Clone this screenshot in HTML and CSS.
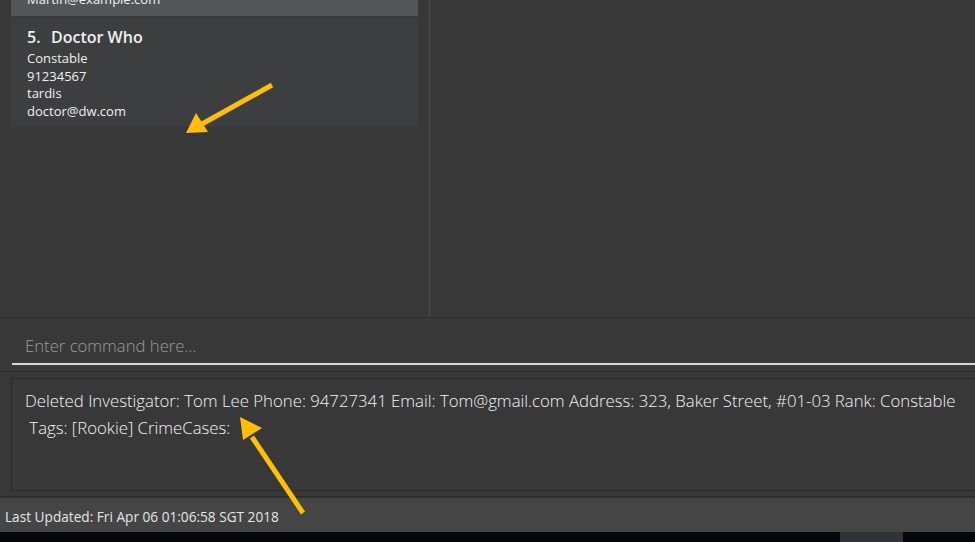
FILE: index.html
```html
<!DOCTYPE html>
<html>
<head>
<meta charset="utf-8">
<link rel="stylesheet" href="styles.css">
</head>
<body>
<div class="app">
  <div class="top">
    <div class="list">
      <div class="card selected">
        <div class="line cut">Martin@example.com</div>
      </div>
      <div class="card">
        <div class="name"><span class="idx">5.</span>Doctor Who</div>
        <div class="line">Constable</div>
        <div class="line">91234567</div>
        <div class="line">tardis</div>
        <div class="line">doctor@dw.com</div>
      </div>
    </div>
    <div class="divider"></div>
    <div class="browser"></div>
  </div>
  <div class="command">
    <div class="cmd-input">Enter command here...</div>
  </div>
  <div class="result">
    <div class="result-box">
      <div class="rline">Deleted Investigator: Tom Lee Phone: 94727341 Email: Tom@gmail.com Address: 323, Baker Street, #01-03 Rank: Constable</div>
      <div class="rline">&nbsp;Tags: [Rookie] CrimeCases:</div>
    </div>
  </div>
  <div class="status">Last Updated: Fri Apr 06 01:06:58 SGT 2018</div>
  <div class="taskbar"><div class="task-item"></div></div>

  <svg class="arrow arrow1" width="110" height="70" viewBox="0 0 110 70">
    <line x1="100" y1="13" x2="30" y2="52" stroke="#ffbe0a" stroke-width="5" stroke-linecap="butt"/>
    <polygon points="14,61 24,41 36,60" fill="#ffbe0a"/>
  </svg>
  <svg class="arrow arrow2" width="90" height="110" viewBox="0 0 90 110">
    <line x1="73" y1="101" x2="22" y2="25" stroke="#ffbe0a" stroke-width="5"/>
    <polygon points="10,5 13,28 32,16" fill="#ffbe0a"/>
  </svg>
</div>
</body>
</html>
```
FILE: styles.css
```css
* { box-sizing: border-box; }
html, body { margin: 0; padding: 0; }
body {
  background: #383838;
  font-family: "Open Sans", "Noto Sans", sans-serif;
  color: #e8e8e8;
  width: 975px;
  height: 542px;
  overflow: hidden;
}
.app {
  position: relative;
  width: 975px;
  height: 542px;
  display: flex;
  flex-direction: column;
}
.top {
  height: 318px;
  display: flex;
  border-bottom: 1px solid #2c2c2c;
}
.list {
  width: 429px;
  padding: 0 11px 0 11px;
  display: flex;
  flex-direction: column;
}
.card {
  background: #3c3e3f;
  padding: 8px 16px 6px 16px;
  border-bottom: 1px solid #36383a;
}
.card.selected {
  background: #515658;
  height: 17px;
  padding: 0 16px;
  overflow: hidden;
  position: relative;
}
.cut {
  position: relative;
  top: -9px;
}
.name {
  font-size: 16px;
  font-weight: 600;
  color: #f0f0f0;
  line-height: 24px;
  margin-bottom: 1px;
}
.idx { display: inline-block; width: 24px; }
.line {
  font-size: 13px;
  line-height: 17.7px;
  color: #f0f0f0;
}
.divider {
  width: 1px;
  background: #4a4a4a;
}
.browser { flex: 1; }
.command {
  height: 54px;
  padding: 13px 0 0 12px;
  border-bottom: 1px solid #2c2c2c;
}
.cmd-input {
  height: 34px;
  border-bottom: 2px solid #d8d8d8;
  padding-left: 13px;
  font-size: 16.7px;
  line-height: 30px;
  color: #9a9a9a;
  font-weight: 300;
}
.result {
  height: 125px;
  padding: 6px 0 5px 11px;
  border-bottom: 1px solid #2c2c2c;
}
.result-box {
  height: 100%;
  border: 1px solid #2a2a2a;
  border-right: none;
  padding: 8px 0 0 13px;
}
.rline {
  font-size: 16.75px;
  line-height: 27px;
  color: #f4f4f4;
  white-space: nowrap;
  font-weight: 300;
}
.status {
  height: 35px;
  background: #454545;
  border-top: 1px solid #2f2f2f;
  padding: 9px 0 0 5px;
  font-size: 13.65px;
  color: #e6e6e6;
}
.taskbar {
  flex: 1;
  background: #05070b;
  position: relative;
  display: flex;
}
.task-item {
  margin-left: 840px;
  width: 63px;
  background: #2f3337;
}
.arrow { position: absolute; }
.arrow1 { left: 172px; top: 72px; }
.arrow2 { left: 230px; top: 412px; }
```
